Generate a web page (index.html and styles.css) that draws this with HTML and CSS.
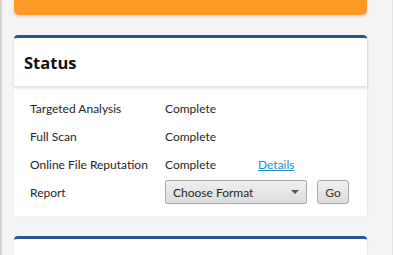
FILE: index.html
```html
<!DOCTYPE html>
<html>
<head>
<meta charset="utf-8">
<link rel="stylesheet" href="styles.css">
</head>
<body>
<div class="page">
  <div class="banner"></div>
  <section class="card">
    <header class="card-head"><h2>Status</h2></header>
    <div class="card-body">
      <div class="row"><span class="label">Targeted Analysis</span><span class="value">Complete</span></div>
      <div class="row"><span class="label">Full Scan</span><span class="value">Complete</span></div>
      <div class="row"><span class="label">Online File Reputation</span><span class="value">Complete</span><a class="link" href="#">Details</a></div>
      <div class="row"><span class="label">Report</span>
        <div class="select"><span>Choose Format</span><svg width="8" height="4" viewBox="0 0 8 4"><path d="M0 0h8L4 4z" fill="#555"/></svg></div>
        <button class="go">Go</button>
      </div>
    </div>
  </section>
  <section class="card next"></section>
</div>
</body>
</html>
```
FILE: styles.css
```css
html, body { margin: 0; height: 100%; overflow: hidden; }
body {
  background: #f4f4f4;
  border-left: 2px solid #d4d4d4;
  border-right: 1px solid #e2e2e2;
  box-sizing: border-box;
  font-family: "Lato", "Open Sans", sans-serif;
  color: #262626;
}
.page {
  padding: 0 25px 0 12px;
  display: flex;
  flex-direction: column;
  gap: 20px;
}
.banner {
  height: 15px;
  background: #fd9a26;
  border-radius: 0 0 5px 5px;
  box-shadow: 0 2px 3px rgba(0,0,0,0.12);
}
.card {
  border-top: 3px solid #2a5595;
  border-radius: 4px 4px 0 0;
  background: #fff;
  box-shadow: 1px 0 2px rgba(0,0,0,0.06);
}
.card-head {
  height: 48px;
  display: flex;
  align-items: center;
  padding-left: 10px;
  box-shadow: 0 2px 3px rgba(0,0,0,0.14);
  position: relative;
}
.card-head h2 {
  margin: 0;
  font-family: "Open Sans", sans-serif;
  font-size: 16.5px;
  font-weight: 700;
  color: #111;
}
.card-body {
  padding: 8px 0 10px 16px;
  height: 112px;
}
.row {
  height: 28px;
  display: flex;
  align-items: center;
  font-size: 12px;
}
.label { width: 135px; }
.value { width: 93px; }
.link { color: #1b8fcf; text-decoration: underline; }
.select {
  box-sizing: border-box;
  width: 142px;
  height: 24px;
  border: 1px solid #a8a8a8;
  border-radius: 2px;
  background: linear-gradient(#f0f0f0, #dcdcdc);
  display: flex;
  align-items: center;
  justify-content: space-between;
  padding: 0 7px;
}
.go {
  margin-left: 10px;
  width: 32px;
  height: 24px;
  border: 1px solid #a8a8a8;
  border-radius: 3px;
  background: linear-gradient(#f0f0f0, #dcdcdc);
  font: inherit;
  color: #333;
  padding: 0;
}
.next { height: 16px; }
```
